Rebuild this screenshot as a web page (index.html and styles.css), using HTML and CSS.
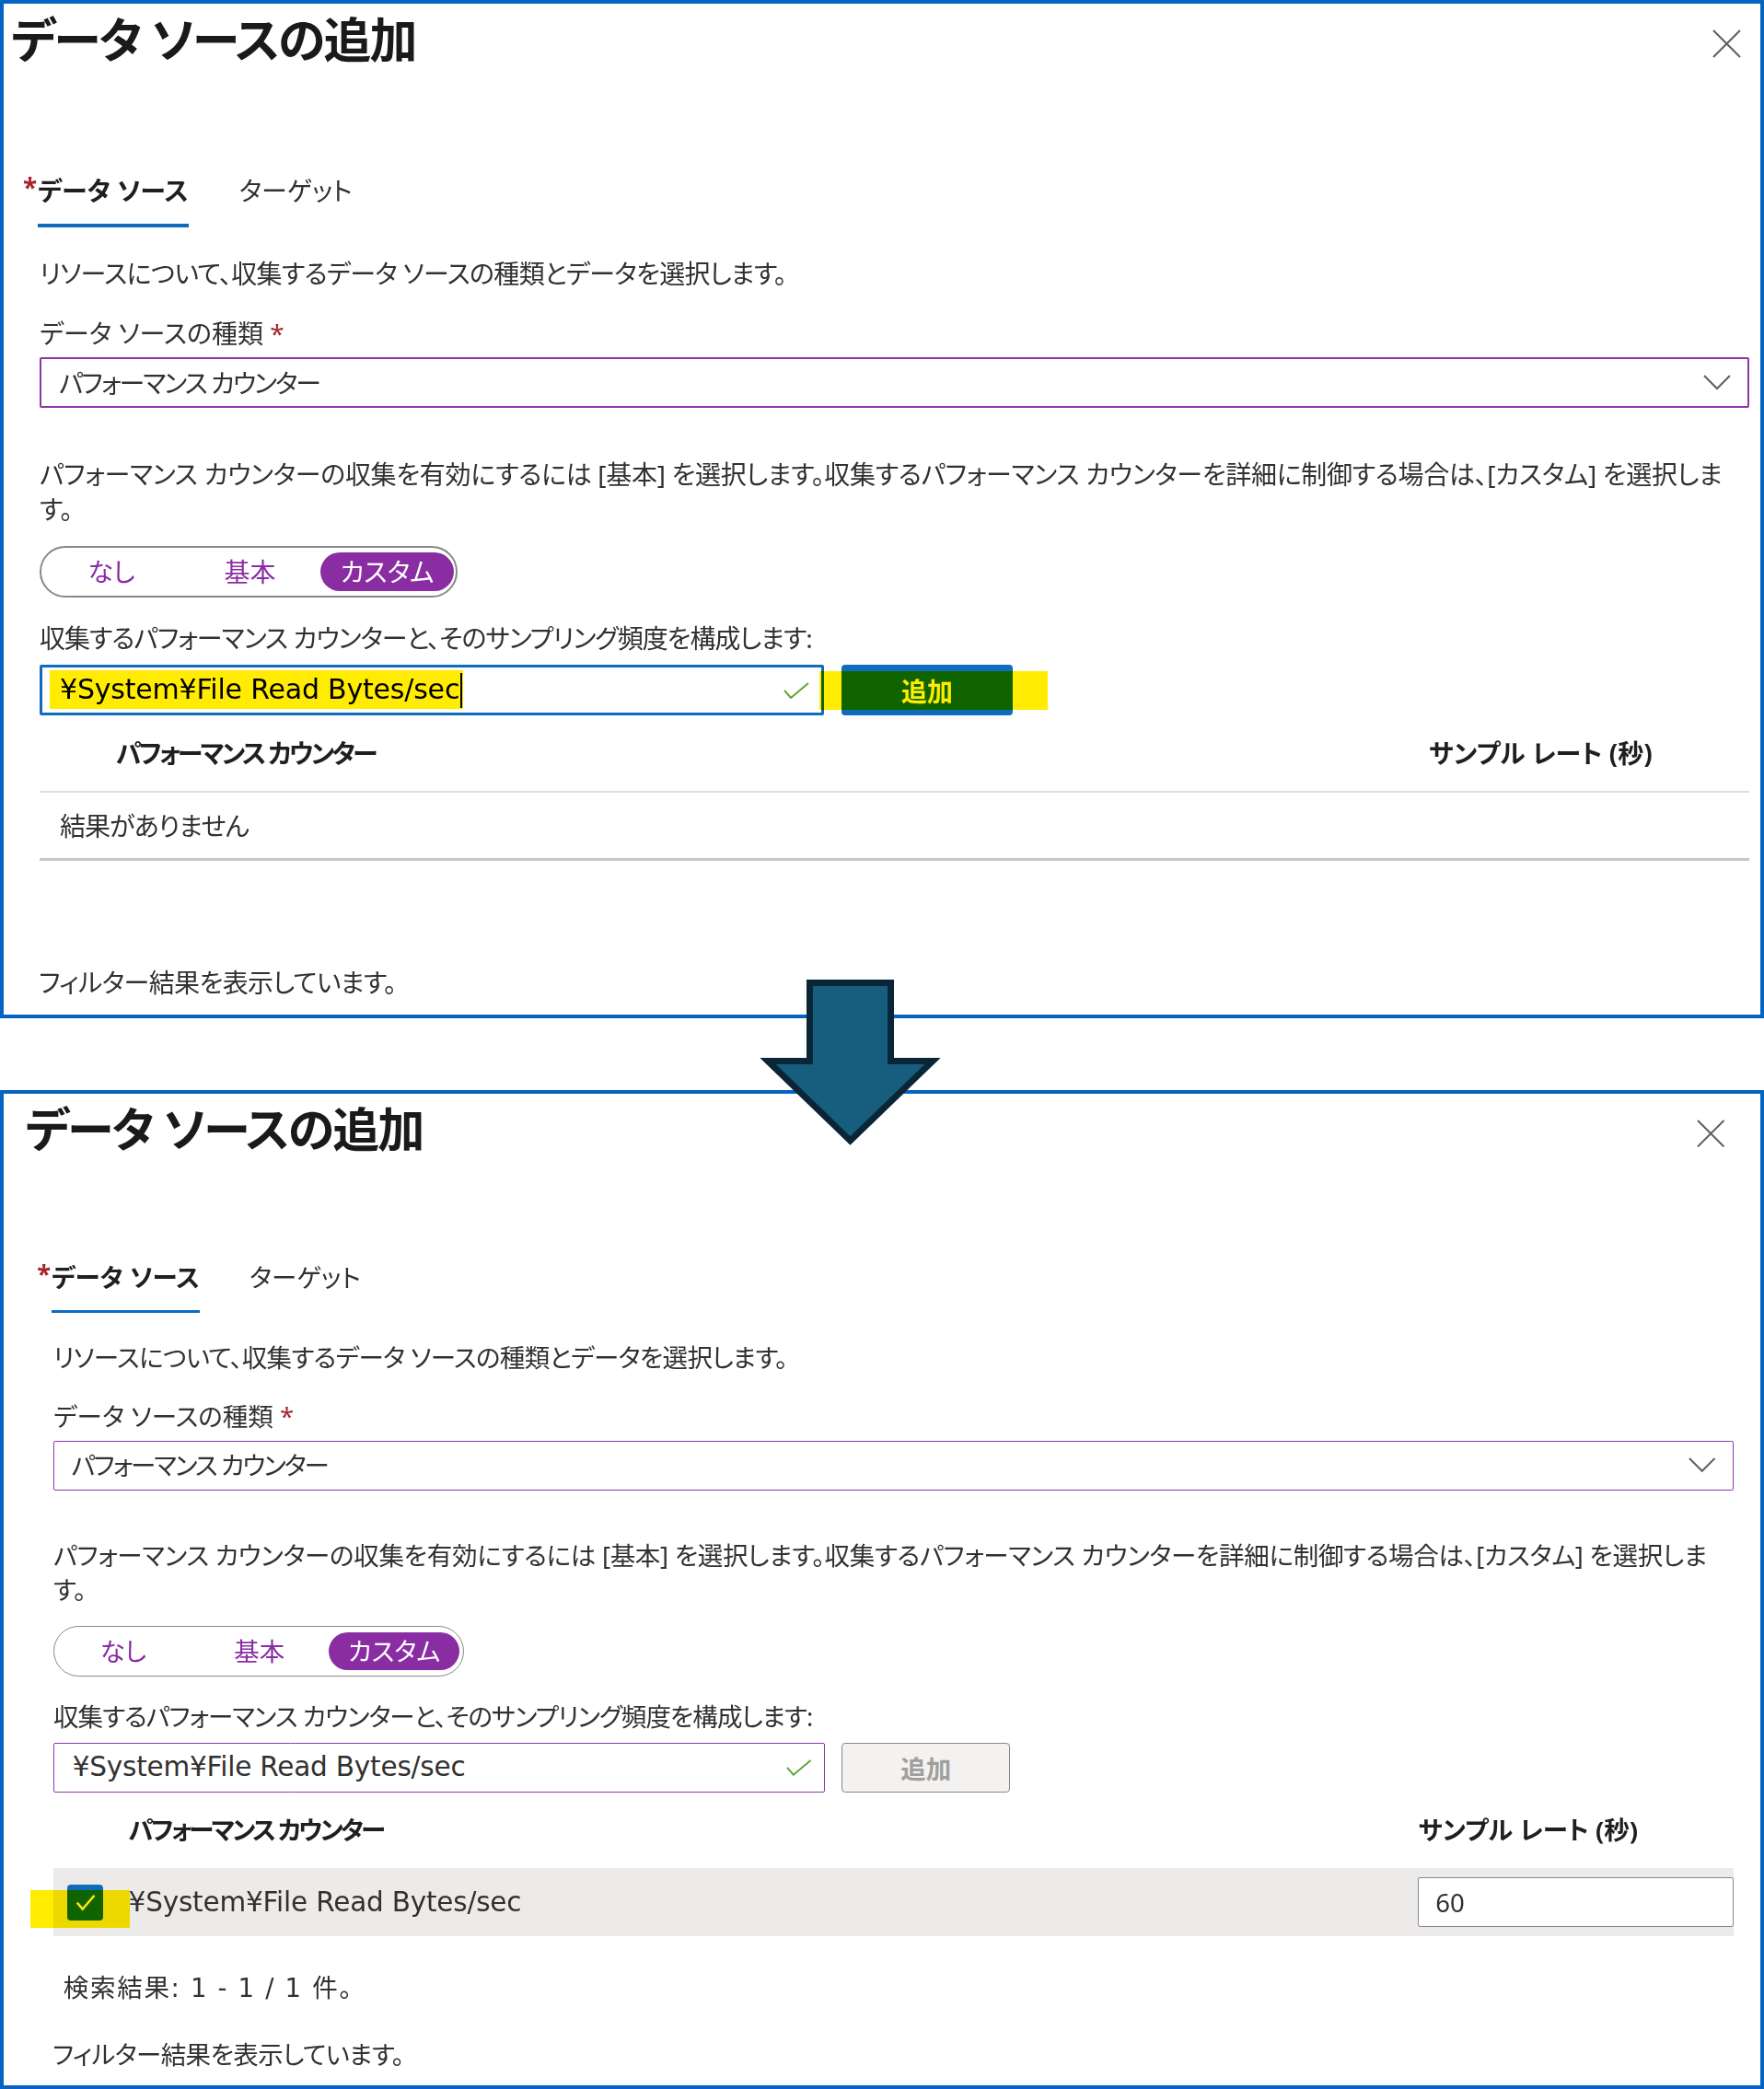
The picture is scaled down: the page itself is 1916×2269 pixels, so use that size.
FILE: index.html
```html
<!DOCTYPE html>
<html lang="ja">
<head>
<meta charset="utf-8">
<title>データ ソースの追加</title>
<link rel="stylesheet" href="styles.css">
</head>
<body>
<div class="page">

  <section class="panel panel-a">
    <div class="inner">
      <header class="head">
        <h1 class="title">データ ソースの追加</h1>
        <svg class="close" viewBox="0 0 31 31"><path d="M1 1 L30 30 M30 1 L1 30" /></svg>
      </header>
      <nav class="tabs">
        <div class="tab active"><span class="star">*</span>データ ソース</div>
        <div class="tab">ターゲット</div>
      </nav>
      <div class="content">
        <p class="desc">リソースについて、収集するデータ ソースの種類とデータを選択します。</p>
        <div class="label">データ ソースの種類 <span class="req">*</span></div>
        <div class="select"><span class="select-val">パフォーマンス カウンター</span><svg class="chev" viewBox="0 0 30 17"><path d="M1 1 L15 15 L29 1"/></svg></div>
        <p class="para">パフォーマンス カウンターの収集を有効にするには [基本] を選択します。収集するパフォーマンス カウンターを詳細に制御する場合は、[カスタム] を選択しま<br>す。</p>
        <div class="toggle"><span class="opt o1">なし</span><span class="opt o2">基本</span><span class="opt on">カスタム</span></div>
        <div class="label2">収集するパフォーマンス カウンターと、そのサンプリング頻度を構成します:</div>
        <div class="addrow">
          <div class="input focus"><span class="latin">¥System¥File Read Bytes/sec<span class="caret"></span></span><svg class="ok" viewBox="0 0 28 18"><path d="M1 9 L8 17 L27 1"/></svg></div>
          <button class="btn primary">追加</button>
          <div class="hl hl-text"></div>
          <div class="hl hl-btn"></div>
        </div>
        <div class="thead"><div class="th-name">パフォーマンス カウンター</div><div class="th-rate">サンプル レート (秒)</div></div>
        <div class="empty">結果がありません</div>
        <p class="foot foot-a">フィルター結果を表示しています。</p>
      </div>
    </div>
  </section>

  <svg class="arrow" viewBox="0 0 202 190"><polygon points="56.5,7.5 144.5,7.5 144.5,92.5 190,92.5 100.5,179 11,92.5 56.5,92.5"/></svg>

  <section class="panel panel-b">
    <div class="inner">
      <header class="head">
        <h1 class="title">データ ソースの追加</h1>
        <svg class="close" viewBox="0 0 31 31"><path d="M1 1 L30 30 M30 1 L1 30" /></svg>
      </header>
      <nav class="tabs">
        <div class="tab active"><span class="star">*</span>データ ソース</div>
        <div class="tab">ターゲット</div>
      </nav>
      <div class="content">
        <p class="desc">リソースについて、収集するデータ ソースの種類とデータを選択します。</p>
        <div class="label">データ ソースの種類 <span class="req">*</span></div>
        <div class="select"><span class="select-val">パフォーマンス カウンター</span><svg class="chev" viewBox="0 0 30 17"><path d="M1 1 L15 15 L29 1"/></svg></div>
        <p class="para">パフォーマンス カウンターの収集を有効にするには [基本] を選択します。収集するパフォーマンス カウンターを詳細に制御する場合は、[カスタム] を選択しま<br>す。</p>
        <div class="toggle"><span class="opt o1">なし</span><span class="opt o2">基本</span><span class="opt on">カスタム</span></div>
        <div class="label2">収集するパフォーマンス カウンターと、そのサンプリング頻度を構成します:</div>
        <div class="addrow">
          <div class="input"><span class="latin">¥System¥File Read Bytes/sec</span><svg class="ok" viewBox="0 0 28 18"><path d="M1 9 L8 17 L27 1"/></svg></div>
          <button class="btn disabled">追加</button>
        </div>
        <div class="thead thead-b"><div class="th-name">パフォーマンス カウンター</div><div class="th-rate">サンプル レート (秒)</div></div>
        <div class="row">
          <span class="cb"><svg viewBox="0 0 40 40"><path d="M11 20 L17 27 L30 12"/></svg></span>
          <span class="row-name latin">¥System¥File Read Bytes/sec</span>
          <span class="rate-input">60</span>
          <div class="hl hl-cb"></div>
        </div>
        <p class="count">検索結果: 1 - 1 / 1 件。</p>
        <p class="foot foot-b">フィルター結果を表示しています。</p>
      </div>
    </div>
  </section>

</div>
</body>
</html>
```

FILE: styles.css
```css
* { box-sizing: border-box; margin: 0; padding: 0; }

html, body { background: #ffffff; }

body {
  margin: 0;
  font-family: "Noto Sans", "Noto Sans CJK JP", sans-serif;
  font-feature-settings: "palt";
  font-size: 28px;
  line-height: 38px;
  color: #323130;
}

.page {
  position: relative;
  width: 1916px;
  height: 2269px;
  overflow: hidden;
}

.panel {
  border: 4px solid #0563c1;
  background: #ffffff;
}

.panel-a { height: 1106px; }
.panel-b { margin-top: 78px; height: 1085px; }

.inner { padding: 9px 12px 0 8px; }
.panel-b .inner { zoom: 0.983; margin: 0 18px 0 16px; }

.latin {
  font-family: "DejaVu Sans", "Noto Sans CJK JP", sans-serif;
  font-size: 30px;
  letter-spacing: -0.2px;
}

/* header */
.head {
  display: flex;
  justify-content: space-between;
  align-items: flex-start;
}

.title {
  font-size: 52px;
  line-height: 60px;
  font-weight: 700;
  letter-spacing: -2px;
  color: #1b1a19;
}

.close {
  width: 31px;
  height: 31px;
  margin: 19px 9px 0 0;
  fill: none;
  stroke: #605e5c;
  stroke-width: 2;
}

/* tabs */
.tabs {
  display: flex;
  gap: 55px;
  margin-top: 116px;
  padding-left: 29px;
  align-items: flex-start;
}

.tab {
  position: relative;
  font-size: 28px;
  line-height: 36px;
  padding-bottom: 18px;
  color: #323130;
}

.tab.active {
  font-weight: 700;
  color: #201f1e;
  border-bottom: 4px solid #0f6cbd;
}

.star {
  position: absolute;
  left: -16px;
  top: -4px;
  color: #a4262c;
  font-weight: 700;
}

/* content */
.content { padding-left: 31px; }

.desc { margin-top: 31px; letter-spacing: -0.7px; }

.label { margin-top: 27px; }
.req { color: #a4262c; }

.select {
  margin-top: 7px;
  height: 55px;
  border: 2px solid #8e36a8;
  border-radius: 2px;
  display: flex;
  align-items: center;
  justify-content: space-between;
  padding: 0 18px 0 19px;
}

.select-val { letter-spacing: -2px; }

.chev {
  width: 30px;
  height: 17px;
  fill: none;
  stroke: #605e5c;
  stroke-width: 2;
}

.para { margin-top: 53px; letter-spacing: -0.3px; }

.toggle {
  margin-top: 21px;
  width: 454px;
  height: 56px;
  border: 2px solid #8a8886;
  border-radius: 28px;
  display: flex;
  align-items: center;
}

.opt {
  text-align: center;
  color: #8a2da3;
}
.opt.o1 { width: 152px; }
.opt.o2 { width: 149px; }
.opt.on {
  width: 145px;
  margin-left: 2px;
  height: 42px;
  line-height: 42px;
  border-radius: 21px;
  background: #8a2da3;
  color: #ffffff;
}

.label2 { margin-top: 25px; letter-spacing: -1px; }

.addrow {
  position: relative;
  margin-top: 10px;
  display: flex;
  gap: 19px;
  height: 55px;
}

.input {
  width: 852px;
  height: 55px;
  border: 2px solid #8e36a8;
  border-radius: 2px;
  display: flex;
  align-items: center;
  justify-content: space-between;
  padding: 0 13px 0 20px;
  background: #ffffff;
}

.input.focus {
  border: 3px solid #0f6cbd;
  padding-left: 19px;
  color: #000000;
}

.caret {
  display: inline-block;
  width: 2px;
  height: 38px;
  background: #000000;
  vertical-align: middle;
  margin-left: 1px;
}

.ok {
  width: 28px;
  height: 18px;
  fill: none;
  stroke: #5ea638;
  stroke-width: 2;
}

.btn {
  width: 186px;
  height: 55px;
  border-radius: 4px;
  font-family: inherit;
  font-feature-settings: "palt";
  font-size: 28px;
  font-weight: 700;
}

.btn.primary {
  background: #0f6cbd;
  color: #ffffff;
  border: none;
}

.btn.disabled {
  background: #f3f2f1;
  border: 2px solid #8a8886;
  color: #a19f9d;
}

.hl {
  position: absolute;
  background: #ffec00;
  mix-blend-mode: multiply;
}
.hl-text { left: 11px; top: 6px; width: 449px; height: 42px; }
.hl-btn { left: 847px; top: 7px; width: 248px; height: 42px; }
.hl-cb { left: -26px; top: 24px; width: 110px; height: 42px; }

/* table */
.thead {
  display: flex;
  align-items: center;
  height: 84px;
  border-bottom: 2px solid #e1dfdd;
  font-weight: 700;
  color: #201f1e;
}
.thead-b { border-bottom: none; }

.th-name { flex: 1; padding-left: 83px; letter-spacing: -2.8px; }
.th-rate { width: 348px; }

.empty {
  height: 74px;
  display: flex;
  align-items: center;
  padding-left: 22px;
  letter-spacing: -0.9px;
  border-bottom: 3px solid #c8c6c4;
}

.row {
  position: relative;
  height: 75px;
  display: flex;
  align-items: center;
  background: #edebe9;
}

.cb {
  width: 40px;
  height: 40px;
  margin-left: 15px;
  background: #0f6cbd;
  border-radius: 4px;
  display: flex;
}
.cb svg {
  width: 40px;
  height: 40px;
  fill: none;
  stroke: #ffffff;
  stroke-width: 2.5;
}

.row-name { flex: 1; margin-left: 28px; }

.rate-input {
  width: 348px;
  height: 55px;
  border: 2px solid #8a8886;
  border-radius: 2px;
  background: #ffffff;
  padding-left: 18px;
  display: flex;
  align-items: center;
}

.count {
  margin-top: 38px;
  padding-left: 11px;
  font-family: "DejaVu Sans", "Noto Sans CJK JP", sans-serif;
  letter-spacing: 1.7px;
}

.foot { margin-left: -1px; letter-spacing: -0.6px; }
.foot-a { margin-top: 113px; }
.foot-b { margin-top: 36px; }

/* arrow overlay between panels */
.arrow {
  position: absolute;
  left: 823px;
  top: 1060px;
  width: 202px;
  height: 190px;
  z-index: 2;
  fill: #175e7e;
  stroke: #0a2536;
  stroke-width: 7;
}
```
